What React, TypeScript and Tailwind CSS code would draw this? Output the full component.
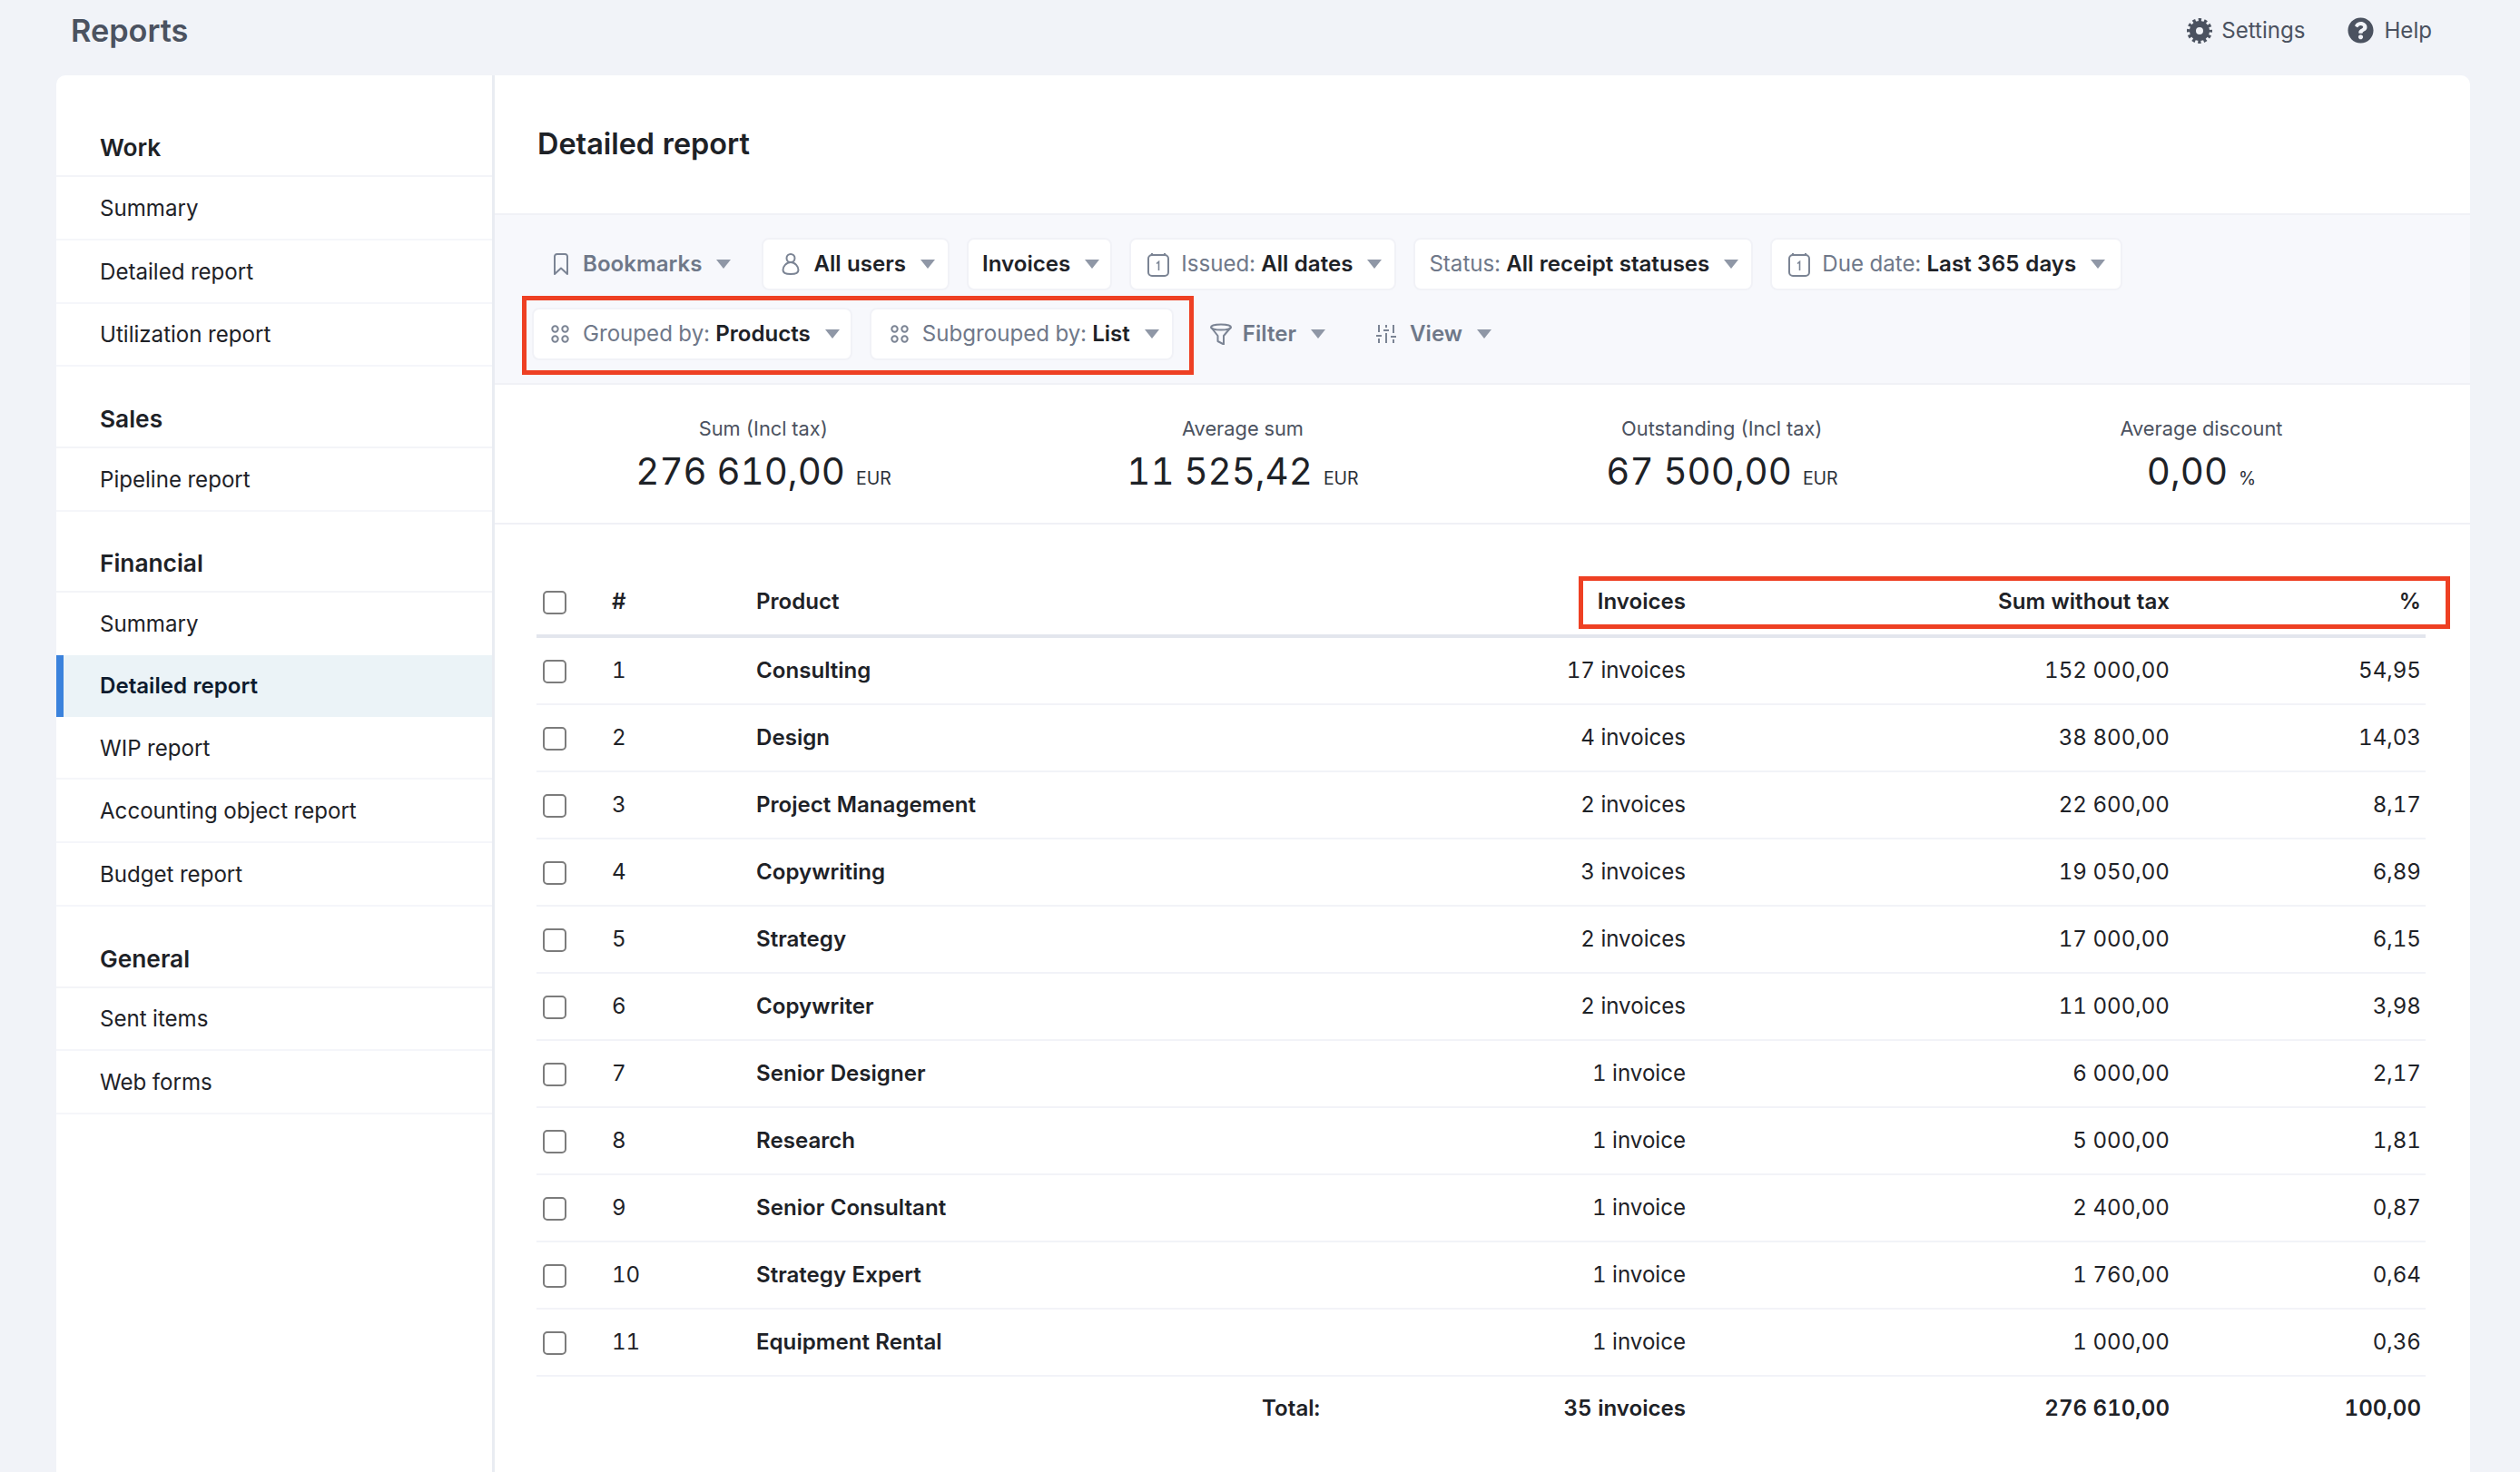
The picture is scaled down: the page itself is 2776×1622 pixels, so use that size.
import React from "react";
import { FaQuestionCircle } from "react-icons/fa";

const sections = [
  { title: "Work", first: true, items: ["Summary", "Detailed report", "Utilization report"] },
  { title: "Sales", items: ["Pipeline report"] },
  { title: "Financial", items: ["Summary", "Detailed report", "WIP report", "Accounting object report", "Budget report"], active: 1 },
  { title: "General", items: ["Sent items", "Web forms"] },
];

const rows: [string, string, string, string][] = [
  ["Consulting", "17 invoices", "152 000,00", "54,95"],
  ["Design", "4 invoices", "38 800,00", "14,03"],
  ["Project Management", "2 invoices", "22 600,00", "8,17"],
  ["Copywriting", "3 invoices", "19 050,00", "6,89"],
  ["Strategy", "2 invoices", "17 000,00", "6,15"],
  ["Copywriter", "2 invoices", "11 000,00", "3,98"],
  ["Senior Designer", "1 invoice", "6 000,00", "2,17"],
  ["Research", "1 invoice", "5 000,00", "1,81"],
  ["Senior Consultant", "1 invoice", "2 400,00", "0,87"],
  ["Strategy Expert", "1 invoice", "1 760,00", "0,64"],
  ["Equipment Rental", "1 invoice", "1 000,00", "0,36"],
];

const stats = [
  ["Sum (Incl tax)", "276 610,00", "EUR"],
  ["Average sum", "11 525,42", "EUR"],
  ["Outstanding (Incl tax)", "67 500,00", "EUR"],
  ["Average discount", "0,00", "%"],
];

const Caret = () => (
  <svg width="16" height="10" viewBox="0 0 16 10" className="shrink-0">
    <polygon points="0,0 16,0 8,10" fill="#8f97a6" />
  </svg>
);

const GearIcon = () => (
  <svg width="28" height="28" viewBox="0 0 28 28" fill="none" stroke="#4b5260" className="mr-[10px] shrink-0">
    <circle cx="14" cy="14" r="7.500" strokeWidth="7" />
    <circle cx="14" cy="14" r="12" strokeWidth="4" strokeDasharray="3.283 3" strokeDashoffset="1.640" />
  </svg>
);

const BookmarkIcon = () => (
  <svg width="18" height="24" viewBox="0 0 18 24" fill="none" stroke="#7b8494" strokeWidth="2" strokeLinejoin="round" className="shrink-0">
    <path d="M2 3.500A2.500 2.500 0 0 1 4.500 1h9A2.500 2.500 0 0 1 16 3.500V23l-7-6.500L2 23z" />
  </svg>
);

const GroupIcon = () => (
  <svg width="20" height="20" viewBox="0 0 20 20" fill="none" stroke="#7b8494" strokeWidth="2" className="shrink-0">
    <circle cx="4.500" cy="4.500" r="3.200" />
    <circle cx="15.500" cy="4.500" r="3.200" />
    <circle cx="4.500" cy="15.500" r="3.200" />
    <circle cx="15.500" cy="15.500" r="3.200" />
  </svg>
);

const UserIcon = () => (
  <svg width="20" height="24" viewBox="0 0 20 24" fill="none" stroke="#7b8494" strokeWidth="2" className="shrink-0">
    <circle cx="10" cy="5.500" r="4.500" />
    <path d="M10 10C5 10 1.500 15 1.500 18.500 1.500 22 5 23 10 23s8.500-1 8.500-4.500C18.500 15 15 10 10 10z" />
  </svg>
);

const CalendarIcon = () => (
  <svg width="24" height="27" viewBox="0 0 24 27" fill="none" stroke="#7b8494" strokeWidth="2" className="shrink-0">
    <rect x="1" y="3" width="22" height="23" rx="4" />
    <path d="M5 1v3M19 1v3" />
    <path d="M10 12.500l2.500-2v9.500" strokeWidth="1.600" />
  </svg>
);

const FunnelIcon = () => (
  <svg width="24" height="24" viewBox="0 0 24 24" fill="none" stroke="#7b8494" strokeWidth="2" strokeLinejoin="round" className="shrink-0">
    <ellipse cx="12" cy="4.500" rx="11" ry="3" />
    <path d="M1 4.500l7.500 9.500v6l6.500 3.500V14L23 4.500" />
  </svg>
);

const ViewIcon = () => (
  <svg width="22" height="20" viewBox="0 0 22 20" fill="none" stroke="#7b8494" strokeWidth="2" className="shrink-0">
    <path d="M3 0v8M0 12h6M3 15v5M11 0v3M8 6h6M11 9v11M19 0v9M16 13h6M19 16v4" />
  </svg>
);

function Chip({ ghost, icon, label, value, boldLabel, pl = "pl-[19px]", pr = "pr-[14px]", gap = "gap-[15px]" }: { ghost?: boolean; icon?: React.ReactNode; label?: string; value?: string; boldLabel?: boolean; pl?: string; pr?: string; gap?: string }) {
  return (
    <div className={`flex items-center h-[58px] rounded-[8px] border-2 ${pr} ${pl} ${gap} ${ghost ? "border-transparent" : "bg-white border-[#f1f2f7]"}`}>
      {icon}
      <span className="flex items-center gap-[16px] whitespace-nowrap">
        <span>
          {label && <span className={`text-[#6f7889] ${boldLabel ? "font-semibold" : "font-normal"}`}>{label}</span>}
          {label && value ? " " : ""}
          {value && <span className="font-semibold text-[#1e2227]">{value}</span>}
        </span>
        <Caret />
      </span>
    </div>
  );
}

const grid = "grid grid-cols-[83px_159px_621px_403px_533px_277px] items-center pr-[5px]";
const box = "ml-[7px] mt-[2px] h-[26px] w-[26px] appearance-none rounded-[5px] border-2 border-[#7c7c7c]";

export default function App() {
  return (
    <div className="relative h-[1622px] w-full overflow-hidden bg-[#f1f3f8] font-[family-name:Inter,sans-serif] text-[24.100px] leading-[32px] text-[#1e2227] tabular-nums">
      <header className="flex h-[83px] items-center justify-between pb-[16px] pl-[78px] pr-[97px]">
        <h1 className="text-[34.300px] font-semibold text-[#4b5260]">Reports</h1>
        <div className="flex items-center text-[#4b5260]">
          <GearIcon />
          <span>Settings</span>
          <FaQuestionCircle className="ml-[47px] mr-[11px] h-[29px] w-[29px]" />
          <span>Help</span>
        </div>
      </header>

      <div className="mx-[62px] mr-[55px] flex h-[1539px] rounded-t-[10px] bg-white">
        <aside className="w-[483px] shrink-0 border-r-[3px] border-[#e9ecf2]">
          {sections.map((s) => (
            <section key={s.title}>
              <h2 className={`flex items-end border-b-2 border-[#f3f4f8] pb-[14px] pl-[48px] text-[26.300px] font-semibold text-[#1e2227] ${s.first ? "h-[112px]" : "h-[89.500px]"}`}>{s.title}</h2>
              {s.items.map((it, i) =>
                s.active === i ? (
                  <div key={it} className="flex h-[68px] items-center border-l-[8px] border-[#3b82dc] bg-[#ebf3f7] pl-[40px] font-semibold text-[#0d1b2e]">{it}</div>
                ) : (
                  <div key={it} className={`flex items-center pl-[48px] pt-[2px] ${s.active !== undefined && i === s.active - 1 ? "h-[68.500px]" : "h-[69.800px] border-b-2 border-[#f5f6fa]"}`}>{it}</div>
                )
              )}
            </section>
          ))}
        </aside>

        <main className="min-w-0 flex-1">
          <div className="flex h-[152px] items-center pl-[47px]">
            <h2 className="text-[32.400px] font-semibold">Detailed report</h2>
          </div>

          <div className="h-[189px] border-y-2 border-[#f0f1f6] bg-[#f7f8fc] pl-[41px] pt-[25px]">
            <div className="flex gap-[19px]">
              <Chip ghost icon={<BookmarkIcon />} label="Bookmarks" boldLabel pl="pl-[21px]" pr="pr-[13px]" />
              <Chip icon={<UserIcon />} value="All users" pl="pl-[20px]" />
              <Chip value="Invoices" pl="pl-[15px]" pr="pr-[12px]" />
              <Chip icon={<CalendarIcon />} label="Issued:" value="All dates" pl="pl-[18px]" gap="gap-[13px]" />
              <Chip label="Status:" value="All receipt statuses" pl="pl-[15px]" />
              <Chip icon={<CalendarIcon />} label="Due date:" value="Last 365 days" pl="pl-[18px]" pr="pr-[17px]" gap="gap-[13px]" />
            </div>
            <div className="mt-[19px] flex gap-[19px]">
              <Chip icon={<GroupIcon />} label="Grouped by:" value="Products" pl="pl-[19px]" pr="pr-[12px]" />
              <Chip icon={<GroupIcon />} label="Subgrouped by:" value="List" pl="pl-[21px]" />
              <Chip ghost icon={<FunnelIcon />} label="Filter" boldLabel gap="gap-[12px]" />
              <Chip ghost icon={<ViewIcon />} label="View" boldLabel />
            </div>
          </div>

          <div className="grid h-[154px] grid-cols-4 border-b-2 border-[#f0f1f6] px-[32px] pt-[33px]">
            {stats.map(([label, value, unit]) => (
              <div key={label} className="flex flex-col items-center">
                <span className="text-[21.800px] leading-[30px] text-[#4b5260]">{label}</span>
                <span className="mt-[7px] flex items-baseline gap-[12px] leading-[52px]">
                  <span className="text-[40.300px]">{value}</span>
                  <span className="text-[19.500px] text-[#2b3038]">{unit}</span>
                </span>
              </div>
            ))}
          </div>

          <div className="ml-[46px] mr-[49px] mt-[47px]">
            <div className={`${grid} h-[78px] border-b-[4px] border-[#e3e6ed] pt-[1px] font-semibold`}>
              <input type="checkbox" className={box} />
              <span>#</span>
              <span>Product</span>
              <span className="text-right">Invoices</span>
              <span className="text-right">Sum without tax</span>
              <span className="text-right">%</span>
            </div>
            {rows.map((r, i) => (
              <div key={r[0]} className={`${grid} h-[74px] border-b-2 border-[#f2f3f8]`}>
                <input type="checkbox" className={box} />
                <span>{i + 1}</span>
                <span className="font-semibold">{r[0]}</span>
                <span className="text-right">{r[1]}</span>
                <span className="text-right">{r[2]}</span>
                <span className="text-right">{r[3]}</span>
              </div>
            ))}
            <div className={`${grid} h-[70px] font-semibold`}>
              <span />
              <span />
              <span className="text-right">Total:</span>
              <span className="text-right">35 invoices</span>
              <span className="text-right">276 610,00</span>
              <span className="text-right">100,00</span>
            </div>
          </div>
        </main>
      </div>

      <div className="pointer-events-none absolute left-[575px] top-[326px] h-[87px] w-[740px] border-[5px] border-[#ee4023]" />
      <div className="pointer-events-none absolute left-[1739px] top-[635px] h-[58px] w-[960px] border-[5px] border-[#ee4023]" />
    </div>
  );
}
